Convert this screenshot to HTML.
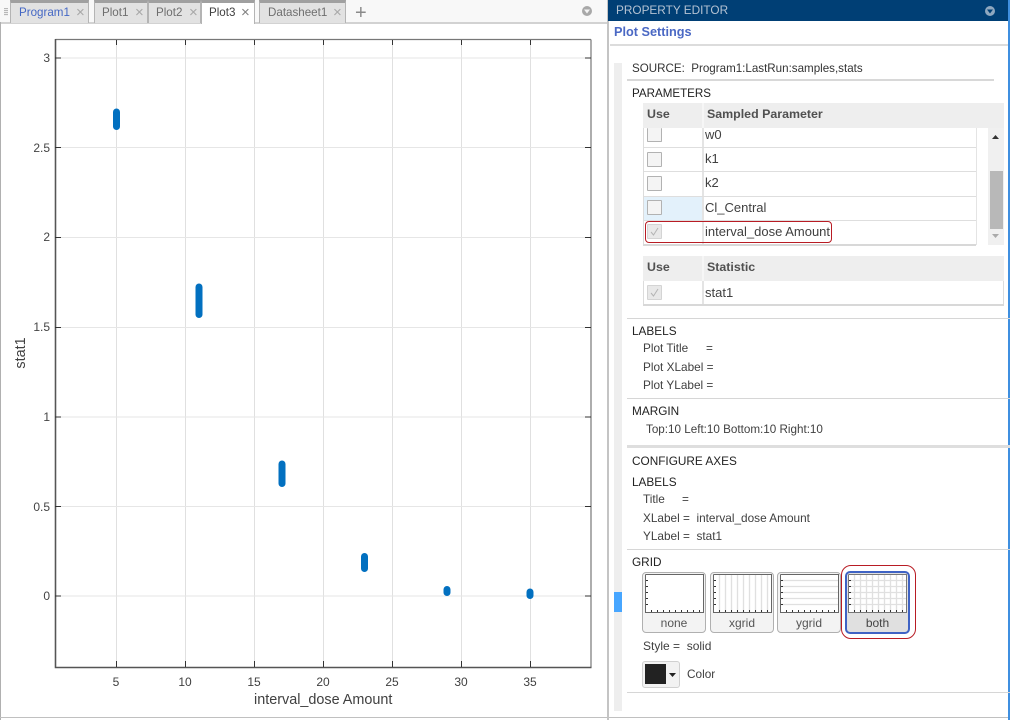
<!DOCTYPE html>
<html><head><meta charset="utf-8">
<style>
html,body{margin:0;padding:0;background:#fff}
#r{position:relative;width:1010px;height:720px;overflow:hidden;background:#fff;font-family:"Liberation Sans",sans-serif;font-size:11.8px;color:#404040;filter:blur(.3px)}
#r div{position:absolute;box-sizing:border-box}
.t{white-space:pre;line-height:14px}
.n{font-size:12px}
.c{font-size:13px}
.tab{top:0;height:23px;background:#e2e2e2;border:1px solid #b4b4b4;border-top:3px solid #a0a0a0;border-bottom:none;color:#6e6e6e;line-height:19px;padding-left:8px;white-space:pre;font-size:11.6px}
.x{color:#a8a8a8;font-size:15px;position:absolute;top:0}
.h{color:#222}
.line{height:1px;background:#d6d6d6;left:627px;width:383px}
.cb{width:15px;height:15px;left:647px;background:#f4f4f4;border:1px solid #b2b2b2;border-radius:1px}
.cb.d{background:#e8e8e8;border-color:#d4d4d4;color:#b0b0b0}
.th{background:#eeeeee;font-weight:bold;color:#505050;line-height:23px;padding-left:4px;white-space:pre;font-size:12.4px}
.gb{top:572px;width:64px;height:61px;border:1px solid #b0b0b0;border-radius:4px;background:#f3f3f3;text-align:center;padding-top:42px;line-height:16px;color:#555;font-size:12px}
.gb svg{position:absolute;left:0;top:0}
</style></head><body>
<div id="r">
<!-- tab strip -->
<div style="left:0;top:0;width:607px;height:22px;background:#f8f8f8"></div>
<div style="left:0;top:22px;width:607px;height:2px;background:#d2d2d2"></div>
<div style="left:4px;top:8px;width:4px;height:8px;background:repeating-linear-gradient(#b8b8b8 0 1px,#eee 1px 2px)"></div>
<div class="tab" style="left:10px;width:79px;color:#4467c4">Program1<span class="x" style="left:65px">×</span></div>
<div class="tab" style="left:94px;width:54px;padding-left:7px">Plot1<span class="x" style="left:40px">×</span></div>
<div class="tab" style="left:148px;width:53px;padding-left:7px">Plot2<span class="x" style="left:40px">×</span></div>
<div class="tab" style="left:201px;width:54px;background:#fff;color:#404040;height:24px;padding-left:7px">Plot3<span class="x" style="left:39px;color:#808080">×</span></div>
<div class="tab" style="left:259px;width:87px">Datasheet1<span class="x" style="left:73px">×</span></div>
<div class="t" style="left:355px;top:3px;font-size:20px;line-height:20px;color:#8a8a8a">+</div>
<svg style="position:absolute;left:581px;top:5px" width="12" height="12"><circle cx="6" cy="6" r="5" fill="#a8a8a8"/><path d="M3 4.5h6L6 8.5z" fill="#f4f4f4"/></svg>

<!-- left and bottom borders -->
<div style="left:0;top:22px;width:1px;height:698px;background:#b0b0b0"></div>
<div style="left:0;top:717px;width:1010px;height:1px;background:#c0c0c0"></div>
<div style="left:607px;top:0;width:2px;height:720px;background:#c4c4c4"></div>

<!-- plot -->
<svg style="position:absolute;left:0;top:0" width="607" height="716">
<g stroke="#e0e0e0" stroke-width="1">
<path d="M116.5 40V667M185.5 40V667M254.5 40V667M323.5 40V667M392.5 40V667M461.5 40V667M530.5 40V667"/>
<path d="M56 58H591M56 147.5H591M56 237.5H591M56 327.5H591M56 417H591M56 506.5H591M56 596H591" stroke="#e6e6e6"/>
</g>
<path d="M55.500 39.500H591M55.500 39.500V667.500M591 39.500V667.500" fill="none" stroke="#777" stroke-width="1.200"/>
<path d="M55.500 39V667.500H591.500" fill="none" stroke="#555" stroke-width="1.500"/>
<g stroke="#333" stroke-width="1">
<path d="M116.500 40v5M185.500 40v5M254.500 40v5M323.500 40v5M392.500 40v5M461.500 40v5M530.500 40v5"/>
<path d="M116.500 667v-6M185.500 667v-6M254.500 667v-6M323.500 667v-6M392.500 667v-6M461.500 667v-6M530.500 667v-6"/>
<path d="M55 58h6M55 147.500h6M55 237.500h6M55 327.500h6M55 417h6M55 506.500h6M55 596h6"/>
<path d="M591 58h-6M591 147.500h-6M591 237.500h-6M591 327.500h-6M591 417h-6M591 506.500h-6M591 596h-6"/>
</g>
<g stroke="#0270c0" stroke-width="7" stroke-linecap="round" fill="none">
<path d="M116.500 112V126.500"/>
<path d="M199 287V314.500"/>
<path d="M282 464V483.500"/>
<path d="M364.500 556.500V568.500"/>
<path d="M447 589.500V592.500"/>
<path d="M530 592V595.500"/>
</g>
</svg>
<div class="t n" style="left:36px;top:51px;width:14px;text-align:right;color:#444">3</div>
<div class="t n" style="left:20px;top:141px;width:30px;text-align:right;color:#444">2.5</div>
<div class="t n" style="left:36px;top:230px;width:14px;text-align:right;color:#444">2</div>
<div class="t n" style="left:20px;top:320px;width:30px;text-align:right;color:#444">1.5</div>
<div class="t n" style="left:36px;top:410px;width:14px;text-align:right;color:#444">1</div>
<div class="t n" style="left:20px;top:500px;width:30px;text-align:right;color:#444">0.5</div>
<div class="t n" style="left:36px;top:589px;width:14px;text-align:right;color:#444">0</div>
<div class="t n" style="left:100px;top:675px;width:32px;text-align:center">5</div>
<div class="t n" style="left:169px;top:675px;width:32px;text-align:center">10</div>
<div class="t n" style="left:238px;top:675px;width:32px;text-align:center">15</div>
<div class="t n" style="left:307px;top:675px;width:32px;text-align:center">20</div>
<div class="t n" style="left:376px;top:675px;width:32px;text-align:center">25</div>
<div class="t n" style="left:445px;top:675px;width:32px;text-align:center">30</div>
<div class="t n" style="left:514px;top:675px;width:32px;text-align:center">35</div>
<div class="t" style="left:254px;top:692px;font-size:14.4px;line-height:16px">interval_dose Amount</div>
<div class="t" style="left:0;top:345px;width:42px;font-size:14.4px;line-height:16px;text-align:center;transform:rotate(-90deg);color:#404040;height:16px">stat1</div>

<!-- property editor -->
<div style="left:608px;top:0;width:400px;height:21px;background:#003f75"></div>
<div class="t" style="left:616px;top:3px;color:#b4c2d2;font-size:11.8px">PROPERTY EDITOR</div>
<svg style="position:absolute;left:984px;top:5px" width="12" height="12"><circle cx="6" cy="6" r="5" fill="#8fa8c0"/><path d="M3 4.500h6L6 8.500z" fill="#003f75"/></svg>
<div style="left:1008px;top:0;width:2px;height:720px;background:#3f8fe0"></div>
<div class="t" style="left:614px;top:25px;color:#4a68c4;font-weight:bold;font-size:12.700px">Plot Settings</div>
<div style="left:610px;top:44px;width:398px;height:2px;background:#dcdcdc"></div>

<div style="left:614px;top:63px;width:8px;height:648px;background:#eeeeee"></div>
<div style="left:614px;top:592px;width:8px;height:20px;background:#47a6ff"></div>

<div class="t" style="left:632px;top:62px;color:#333;font-size:11.6px">SOURCE:  Program1:LastRun:samples,stats</div>
<div style="left:627px;top:79px;width:367px;height:2px;background:#d8d8d8"></div>
<div class="t h" style="left:632px;top:87px;font-size:11.600px">PARAMETERS</div>

<!-- table 1 -->
<div class="th" style="left:643px;top:103px;width:60px;height:25px">Use</div>
<div style="left:702px;top:103px;width:2px;height:25px;background:#f6f6f6"></div>
<div class="th" style="left:704px;top:103px;width:300px;height:25px;padding-left:3px">Sampled Parameter</div>
<div style="left:643px;top:128px;width:1px;height:117px;background:#dcdcdc"></div>
<div style="left:702px;top:128px;width:2px;height:117px;background:#e4e4e4"></div>
<div style="left:976px;top:128px;width:1px;height:117px;background:#e4e4e4"></div>
<div style="left:644px;top:147px;width:332px;height:1px;background:#dedede"></div>
<div style="left:644px;top:171px;width:332px;height:1px;background:#dedede"></div>
<div style="left:644px;top:196px;width:332px;height:1px;background:#dedede"></div>
<div style="left:644px;top:220px;width:332px;height:1px;background:#dedede"></div>
<div style="left:643px;top:244px;width:333px;height:2px;background:#d8d8d8"></div>
<div style="left:644px;top:197px;width:58px;height:23px;background:#e3f1fb"></div>
<div class="cb" style="top:128px;height:14px;border-top:none"></div>
<div class="cb" style="top:152px"></div>
<div class="cb" style="top:176px"></div>
<div class="cb" style="top:200px"></div>
<div class="cb d" style="top:224px"><svg style="position:absolute;left:1px;top:1px" width="11" height="11"><path d="M2 6l2.500 3L9 2" fill="none" stroke="#b4b4b4"/></svg></div>
<div class="t c" style="left:705px;top:128px">w0</div>
<div class="t c" style="left:705px;top:152px">k1</div>
<div class="t c" style="left:705px;top:176px">k2</div>
<div class="t c" style="left:705px;top:201px">Cl_Central</div>
<div class="t c" style="left:705px;top:225px">interval_dose Amount</div>
<div style="left:645px;top:221px;width:187px;height:22px;border:1px solid #b81c24;border-radius:4px"></div>
<!-- scrollbar -->
<div style="left:988px;top:128px;width:16px;height:117px;background:#f0f0f0"></div>
<div style="left:990px;top:171px;width:13px;height:58px;background:#b8b8b8"></div>
<svg style="position:absolute;left:991px;top:133px" width="10" height="8"><path d="M1 6h7L4.500 2z" fill="#333"/></svg>
<svg style="position:absolute;left:991px;top:232px" width="10" height="8"><path d="M1 2h7L4.500 6z" fill="#aaa"/></svg>

<!-- table 2 -->
<div class="th" style="left:643px;top:256px;width:60px;height:25px">Use</div>
<div style="left:702px;top:256px;width:2px;height:25px;background:#f6f6f6"></div>
<div class="th" style="left:704px;top:256px;width:300px;height:25px;padding-left:3px">Statistic</div>
<div style="left:643px;top:281px;width:1px;height:24px;background:#dcdcdc"></div>
<div style="left:702px;top:281px;width:2px;height:24px;background:#e4e4e4"></div>
<div style="left:1003px;top:281px;width:1px;height:24px;background:#dcdcdc"></div>
<div style="left:643px;top:304px;width:361px;height:2px;background:#d8d8d8"></div>
<div class="cb d" style="top:285px"><svg style="position:absolute;left:1px;top:1px" width="11" height="11"><path d="M2 6l2.500 3L9 2" fill="none" stroke="#b4b4b4"/></svg></div>
<div class="t c" style="left:705px;top:286px">stat1</div>

<div class="line" style="top:318px"></div>
<div class="t h" style="left:632px;top:324px">LABELS</div>
<div class="t" style="left:643px;top:341px">Plot Title</div><div class="t" style="left:706px;top:341px">=</div>
<div class="t" style="left:643px;top:360px">Plot XLabel =</div>
<div class="t" style="left:643px;top:378px">Plot YLabel =</div>
<div class="line" style="top:398px"></div>
<div class="t h" style="left:632px;top:404px">MARGIN</div>
<div class="t" style="left:646px;top:423px;font-size:11.670px">Top:10 Left:10 Bottom:10 Right:10</div>
<div style="left:627px;top:445px;width:383px;height:3px;background:#dedede"></div>
<div class="t h" style="left:632px;top:454px">CONFIGURE AXES</div>
<div class="t h" style="left:632px;top:475px">LABELS</div>
<div class="t" style="left:643px;top:492px">Title</div><div class="t" style="left:682px;top:492px">=</div>
<div class="t" style="left:643px;top:511px">XLabel =  interval_dose Amount</div>
<div class="t" style="left:643px;top:529px">YLabel =  stat1</div>
<div class="line" style="top:549px"></div>
<div class="t h" style="left:632px;top:555px">GRID</div>

<!-- grid buttons -->
<div class="gb" style="left:642px">none
<svg width="62" height="41"><rect x="2" y="1" width="59" height="39" fill="#fff"/><path d="M2.500 1.500V39.500H60.500V1.500H2.500" fill="none" stroke="#666"/><path d="M3 7.500h2M3 13.500h2M3 19.500h2M3 25.500h2M3 31.500h2M8.500 39v-2M14.500 39v-2M20.500 39v-2M26.500 39v-2M32.500 39v-2M38.500 39v-2M44.500 39v-2M50.500 39v-2M56.500 39v-2" stroke="#333"/></svg></div>
<div class="gb" style="left:710px">xgrid
<svg width="62" height="41"><rect x="2" y="1" width="59" height="39" fill="#fff"/><path d="M8.500 2V39M14.500 2V39M20.500 2V39M26.500 2V39M32.500 2V39M38.500 2V39M44.500 2V39M50.500 2V39M56.500 2V39" stroke="#e0e0e0" stroke-width="1.300"/><path d="M2.500 1.500V39.500H60.500V1.500H2.500" fill="none" stroke="#666"/><path d="M3 7.500h2M3 13.500h2M3 19.500h2M3 25.500h2M3 31.500h2M8.500 39v-2M14.500 39v-2M20.500 39v-2M26.500 39v-2M32.500 39v-2M38.500 39v-2M44.500 39v-2M50.500 39v-2M56.500 39v-2" stroke="#333"/></svg></div>
<div class="gb" style="left:777px">ygrid
<svg width="62" height="41"><rect x="2" y="1" width="59" height="39" fill="#fff"/><path d="M3 7.500H60M3 13.500H60M3 19.500H60M3 25.500H60M3 31.500H60" stroke="#e0e0e0" stroke-width="1.300"/><path d="M2.500 1.500V39.500H60.500V1.500H2.500" fill="none" stroke="#666"/><path d="M3 7.500h2M3 13.500h2M3 19.500h2M3 25.500h2M3 31.500h2M8.500 39v-2M14.500 39v-2M20.500 39v-2M26.500 39v-2M32.500 39v-2M38.500 39v-2M44.500 39v-2M50.500 39v-2M56.500 39v-2" stroke="#333"/></svg></div>
<div class="gb" style="left:845px;top:571px;width:65px;height:63px;background:#e0e0e0;border:2px solid #3f63c4;padding-top:42px;border-radius:5px;color:#444">both
<svg style="left:-1px;top:0" width="62" height="41"><rect x="2" y="1" width="59" height="39" fill="#fff"/><path d="M8.500 2V39M14.500 2V39M20.500 2V39M26.500 2V39M32.500 2V39M38.500 2V39M44.500 2V39M50.500 2V39M56.500 2V39M3 7.500H60M3 13.500H60M3 19.500H60M3 25.500H60M3 31.500H60" stroke="#e0e0e0" stroke-width="1.300"/><path d="M2.500 1.500V39.500H60.500V1.500H2.500" fill="none" stroke="#777"/><path d="M3 7.500h2M3 13.500h2M3 19.500h2M3 25.500h2M3 31.500h2M8.500 39v-2M14.500 39v-2M20.500 39v-2M26.500 39v-2M32.500 39v-2M38.500 39v-2M44.500 39v-2M50.500 39v-2M56.500 39v-2" stroke="#333"/></svg></div>
<div style="left:841px;top:565px;width:75px;height:74px;border:1px solid #b81c24;border-radius:10px"></div>

<div class="t" style="left:643px;top:639px;font-size:12px">Style =  solid</div>
<div style="left:642px;top:661px;width:38px;height:27px;border:1px solid #d0d0d0;border-radius:3px;background:#f2f2f2"></div>
<div style="left:645px;top:664px;width:21px;height:20px;background:#222"></div>
<svg style="position:absolute;left:668px;top:672px" width="10" height="6"><path d="M1 1h7L4.500 5z" fill="#222"/></svg>
<div class="t" style="left:687px;top:667px">Color</div>
<div class="line" style="top:692px"></div>
</div>
</body></html>
